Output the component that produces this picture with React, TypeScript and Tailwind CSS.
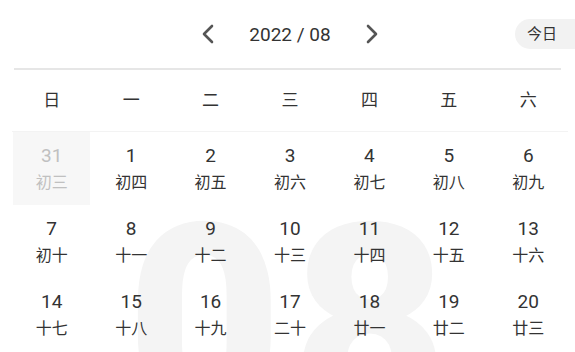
import React from "react";

const weekdays = ["日", "一", "二", "三", "四", "五", "六"];
const rows: { d: string; l: string; off?: boolean }[][] = [
  [
    { d: "31", l: "初三", off: true },
    { d: "1", l: "初四" },
    { d: "2", l: "初五" },
    { d: "3", l: "初六" },
    { d: "4", l: "初七" },
    { d: "5", l: "初八" },
    { d: "6", l: "初九" },
  ],
  [
    { d: "7", l: "初十" },
    { d: "8", l: "十一" },
    { d: "9", l: "十二" },
    { d: "10", l: "十三" },
    { d: "11", l: "十四" },
    { d: "12", l: "十五" },
    { d: "13", l: "十六" },
  ],
  [
    { d: "14", l: "十七" },
    { d: "15", l: "十八" },
    { d: "16", l: "十九" },
    { d: "17", l: "二十" },
    { d: "18", l: "廿一" },
    { d: "19", l: "廿二" },
    { d: "20", l: "廿三" },
  ],
];

export default function App() {
  return (
    <div className="relative w-[575px] h-[352px] overflow-hidden bg-white font-['Roboto','Noto_Sans_CJK_SC',sans-serif] text-[#333]">
      {/* watermark */}
      <div className="absolute left-[9px] w-[556px] top-[188px] pl-[10px] text-center text-[268px] leading-none font-black tracking-[10px] text-[#f4f4f4] select-none">
        08
      </div>

      {/* header */}
      <div className="relative h-[68px] flex items-center justify-center gap-[34px] pl-[5px]">
        <svg width="14" height="20" viewBox="0 0 14 20" className="text-[#555]">
          <path d="M11 2 L3 10 L11 18" fill="none" stroke="currentColor" strokeWidth="2.6" strokeLinecap="round" strokeLinejoin="round" />
        </svg>
        <div className="text-[19px] leading-none text-[#333]">2022 / 08</div>
        <svg width="14" height="20" viewBox="0 0 14 20" className="text-[#555]">
          <path d="M3 2 L11 10 L3 18" fill="none" stroke="currentColor" strokeWidth="2.6" strokeLinecap="round" strokeLinejoin="round" />
        </svg>
        <div className="absolute left-[515px] top-[19px] h-[30px] w-[76px] rounded-full bg-[#f2f2f2] pl-[12px] flex items-center text-[15px] text-[#333]">
          今日
        </div>
      </div>

      <div className="relative mx-[14px] h-[2px] bg-[#e6e6e6]" />

      <div className="relative ml-[12px] w-[556px]">
        <div className="grid grid-cols-7 h-[62px] items-center border-b border-[#f3f3f3]">
          {weekdays.map((w) => (
            <div key={w} className="text-center text-[17px] leading-none text-[#333]">
              {w}
            </div>
          ))}
        </div>
        {rows.map((r, i) => (
          <div key={i} className="grid grid-cols-7 h-[73px]">
            {r.map((c) => (
              <div
                key={c.d}
                className={`flex flex-col items-center pt-[12px] ${c.off ? "bg-[#f7f7f7] text-[#c0c0c0] mx-[1px]" : "text-[#333]"}`}
              >
                <div className="text-[19px] leading-[24px]">{c.d}</div>
                <div className="mt-[3px] text-[16px] leading-[24px]">{c.l}</div>
              </div>
            ))}
          </div>
        ))}
      </div>
    </div>
  );
}
